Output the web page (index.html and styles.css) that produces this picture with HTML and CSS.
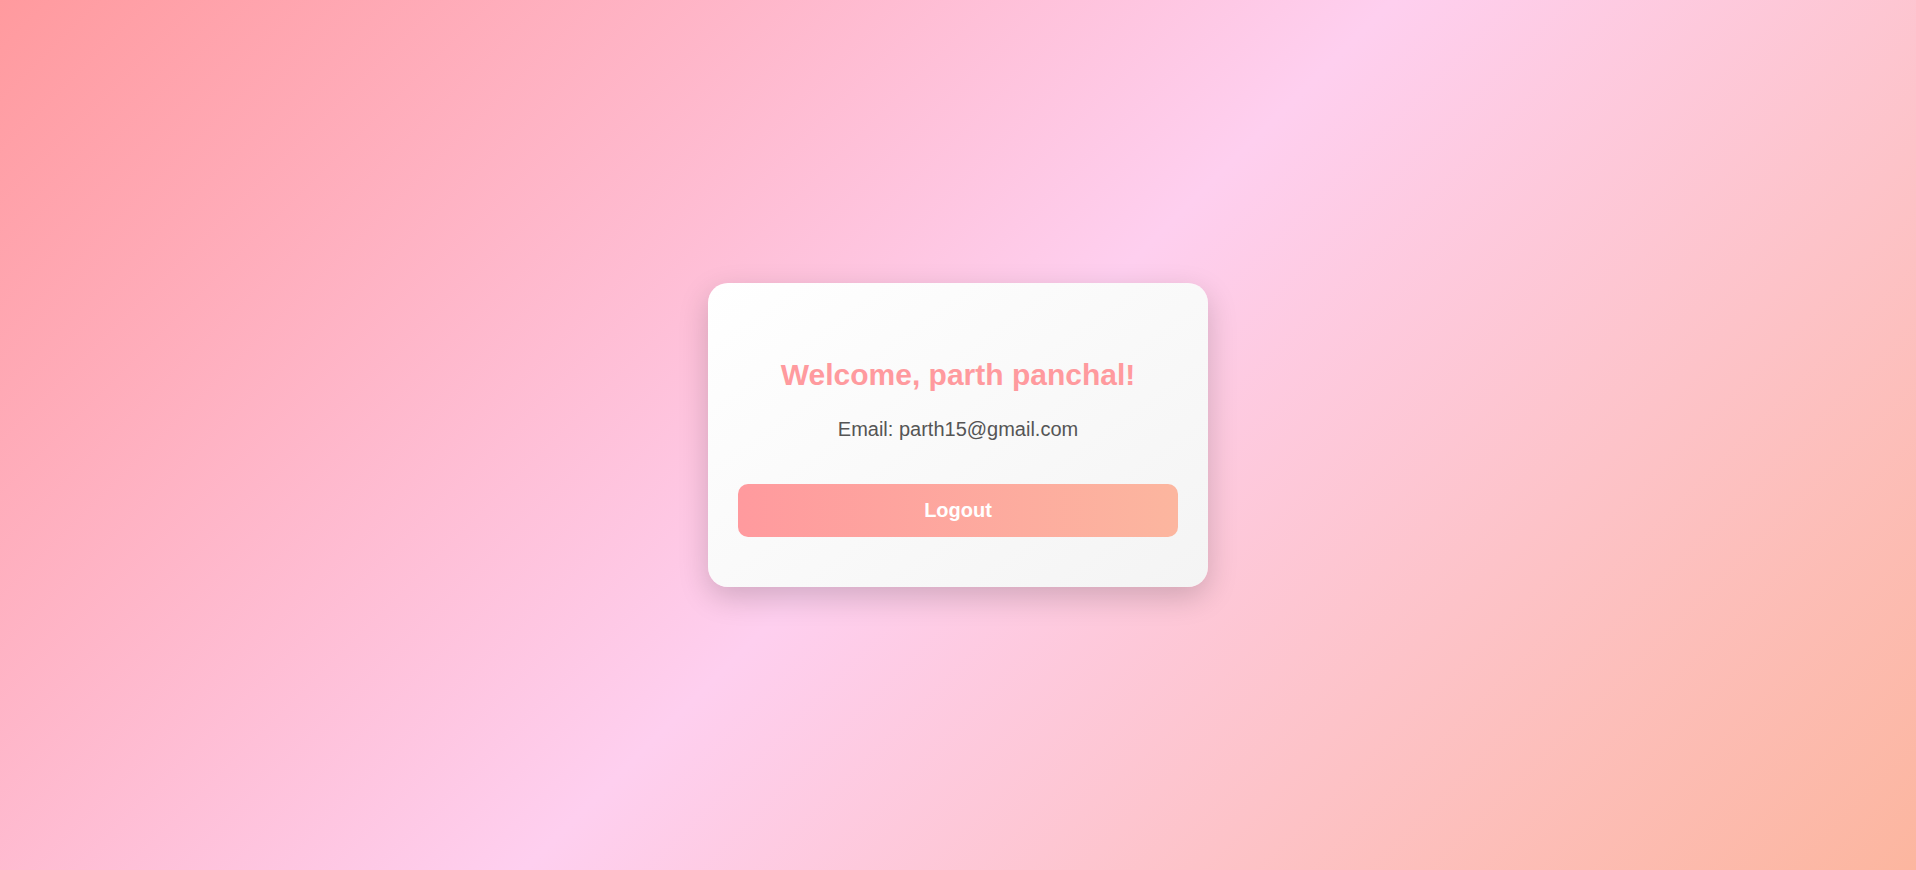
FILE: index.html
```html
<!DOCTYPE html>
<html lang="en">
<head>
<meta charset="UTF-8">
<title>Dashboard</title>
<link rel="stylesheet" href="styles.css">
</head>
<body>
  <main class="page">
    <section class="card">
      <h2 class="card-title">Welcome, parth panchal!</h2>
      <p class="card-email">Email: parth15@gmail.com</p>
      <button class="logout-btn" type="button">Logout</button>
    </section>
  </main>
</body>
</html>
```

FILE: styles.css
```css
* {
  box-sizing: border-box;
}

html, body {
  margin: 0;
  padding: 0;
  height: 100%;
}

body {
  font-family: "Liberation Sans", Arial, sans-serif;
  background: linear-gradient(135deg, #ff9a9e 0%, #fecfef 50%, #fcb69f 100%);
  min-height: 100vh;
}

.page {
  min-height: 100vh;
  display: flex;
  align-items: center;
  justify-content: center;
}

.card {
  width: 500px;
  padding: 50px 30px;
  border-radius: 20px;
  background: linear-gradient(145deg, #ffffff 0%, #f4f4f4 100%);
  box-shadow: 0 10px 30px rgba(0, 0, 0, 0.18);
  text-align: center;
}

.card-title {
  margin: 25px 0 26px;
  font-size: 30px;
  font-weight: bold;
  color: #ff9a9e;
}

.card-email {
  margin: 0 0 43px;
  font-size: 20px;
  color: #555555;
}

.logout-btn {
  display: block;
  width: 100%;
  padding: 15px 0;
  border: none;
  border-radius: 10px;
  background: linear-gradient(90deg, #ff9a9e 0%, #fcb69f 100%);
  color: #ffffff;
  font-family: "Liberation Sans", Arial, sans-serif;
  font-size: 20px;
  font-weight: bold;
  cursor: pointer;
}
```
